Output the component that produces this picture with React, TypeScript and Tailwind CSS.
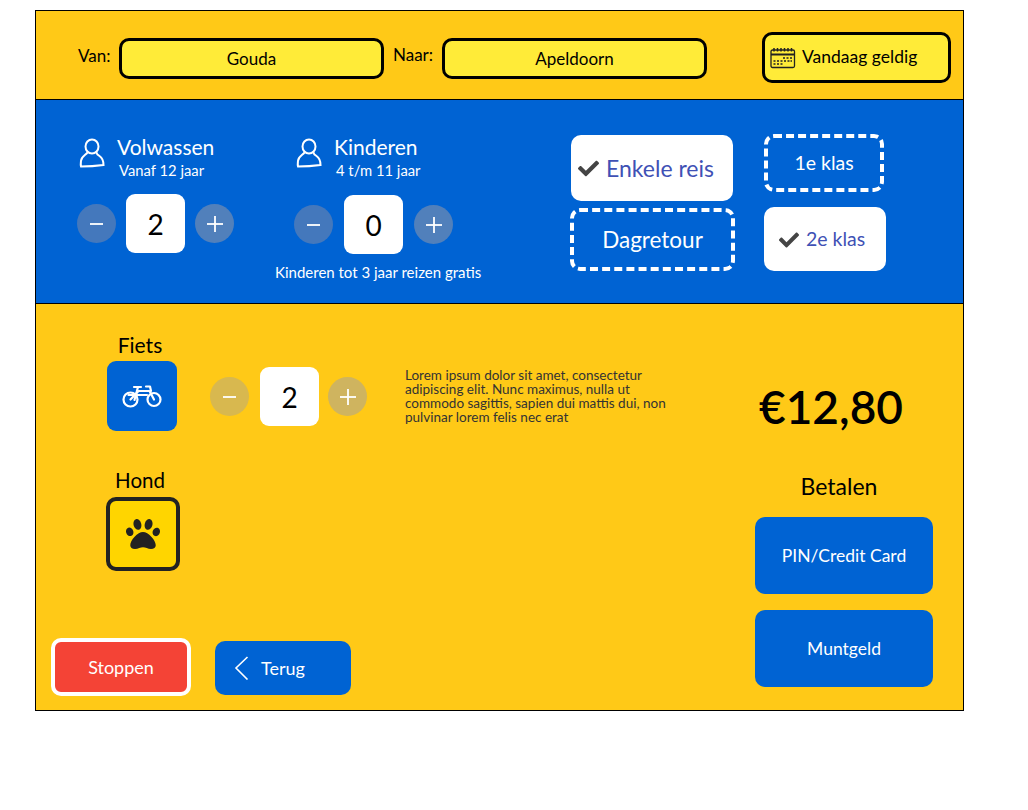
import { FaCheck, FaPaw } from 'react-icons/fa';

function PersonIcon() {
  return (
    <svg width="26" height="30" viewBox="0 0 26 30" fill="none" stroke="white" strokeWidth="2" strokeLinecap="round" className="shrink-0">
      <ellipse cx="13" cy="8.5" rx="6.5" ry="7" />
      <path d="M8.5 14.5C7 17 2.5 18 2 23C1.8 25 1.5 27 2 28.5C9 28.5 17 28 24.5 27C24.5 23 23.5 20 20.5 18C19 17 17.5 16 17.5 14.5" />
    </svg>
  );
}

function CalendarIcon() {
  return (
    <svg width="26" height="22" viewBox="0 0 26 22" fill="none" stroke="#222" strokeWidth="1.3" className="shrink-0">
      <rect x="1" y="3" width="23.5" height="17.5" rx="1.5" />
      <path d="M1 7.5H24.5" strokeWidth="2" />
      <path d="M4 1V4.5M7.5 1V4.5M11 1V4.5M14.5 1V4.5M18 1V4.5M21.5 1V4.5" strokeWidth="1.5" />
      <path d="M13 11H15M16.5 11H18.5M20 11H22M3.5 14H5.5M7 14H9M10.5 14H12.5M14 14H16M17.5 14H19.5M20.5 14H22M3.5 17H5.5M7 17H9M10.5 17H12.5" strokeWidth="1.3" />
    </svg>
  );
}

function BikeIcon() {
  return (
    <svg width="40" height="23" viewBox="0 0 40 23" fill="none" stroke="white" strokeWidth="2.2" strokeLinecap="round" strokeLinejoin="round">
      <circle cx="8.5" cy="14.5" r="7" />
      <circle cx="32" cy="14.5" r="6.5" />
      <path d="M8.5 14.5L16.5 6H27.5L32 14.5" />
      <path d="M6.5 10H25M12.5 15L16 2M12 2H19M24 1.5H28L29 6" />
    </svg>
  );
}

function Stepper({
  value,
  minusClass,
  plusClass,
  boxClass,
}: {
  value: number;
  minusClass: string;
  plusClass: string;
  boxClass: string;
}) {
  return (
    <div className="flex items-center">
      <div className={`flex h-[39px] w-[39px] items-center justify-center rounded-full ${minusClass}`}>
        <span className="h-[2px] w-[13px] bg-white/90" />
      </div>
      <div className={`flex h-[59px] w-[59px] items-center justify-center rounded-[9px] bg-white text-[28px] text-black ${boxClass}`}>
        {value}
      </div>
      <div className={`relative flex h-[39px] w-[39px] items-center justify-center rounded-full ${plusClass}`}>
        <span className="h-[2px] w-[16px] bg-white/90" />
        <span className="absolute h-[16px] w-[2px] bg-white/90" />
      </div>
    </div>
  );
}

function Passenger({ title, sub }: { title: string; sub: string }) {
  return (
    <div className="flex h-[60px] items-start">
      <div className="ml-[2px] mt-[4px]">
        <PersonIcon />
      </div>
      <div className="-mt-[1px] ml-[12px] text-white">
        <div className="text-[21px] leading-[28px]">{title}</div>
        <div className="ml-[2px] text-[14.8px] leading-[18px]">{sub}</div>
      </div>
    </div>
  );
}

export default function App() {
  return (
    <div className="bg-white pl-[35px] pt-[10px] font-['Lato',sans-serif]">
      <div className="h-[701px] w-[929px] border border-black">
        {/* Van / naar */}
        <div className="flex h-[89px] items-center border-b border-black bg-[#FFC917] pt-[6px] text-black">
          <span className="ml-[42px] w-[41px] pb-[4px] text-[17px]">Van:</span>
          <div className="flex h-[41px] w-[265px] items-center justify-center rounded-[10px] border-[3px] border-black bg-[#FFEB38] pt-[2px] text-[17px]">
            Gouda
          </div>
          <span className="ml-[9px] w-[49px] pb-[6px] text-[17px]">Naar:</span>
          <div className="flex h-[41px] w-[265px] items-center justify-center rounded-[10px] border-[3px] border-black bg-[#FFEB38] pt-[2px] text-[17px]">
            Apeldoorn
          </div>
          <div className="-mt-[1px] ml-[55px] flex h-[51px] w-[189px] items-center rounded-[10px] border-[3px] border-black bg-[#FFEB38] pl-[5px]">
            <CalendarIcon />
            <span className="ml-[6px] text-[17.5px]">Vandaag geldig</span>
          </div>
        </div>

        {/* Reizigers */}
        <div className="flex h-[204px] border-b border-black bg-[#0063D3] pt-[34px]">
          <div className="ml-[41px] w-[217px]">
            <Passenger title="Volwassen" sub="Vanaf 12 jaar" />
            <Stepper value={2} minusClass="bg-[#4478BC]" plusClass="ml-[10px] bg-[#5180BB]" boxClass="ml-[10px]" />
          </div>
          <div className="w-[276px]">
            <Passenger title="Kinderen" sub="4 t/m 11 jaar" />
            <div className="mt-[1px]">
              <Stepper value={0} minusClass="bg-[#4478BC]" plusClass="ml-[11px] bg-[#5180BB]" boxClass="ml-[11px]" />
            </div>
            <div className="-ml-[19px] mt-[8px] whitespace-nowrap text-[15px] leading-[20px] text-white">
              Kinderen tot 3 jaar reizen gratis
            </div>
          </div>
          <div className="w-[165px]">
            <div className="ml-[1px] mt-[1px] flex h-[66px] w-[162px] items-center rounded-[10px] bg-white pl-[7px] text-[23px] text-[#3F51B5]">
              <FaCheck className="mr-[7px] h-[21px] w-[21px] text-[#444]" />
              Enkele reis
            </div>
            <div className="mt-[7px] flex h-[63px] w-[165px] items-center justify-center rounded-[10px] border-[4px] border-dashed border-white text-[22.5px] text-white">
              Dagretour
            </div>
          </div>
          <div className="ml-[29px]">
            <div className="flex h-[58px] w-[120px] items-center justify-center rounded-[10px] border-[4px] border-dashed border-white text-[19.5px] text-white">
              1e klas
            </div>
            <div className="mt-[15px] flex h-[64px] w-[122px] items-center rounded-[10px] bg-white pb-[1px] pl-[15px] text-[19.5px] text-[#3F51B5]">
              <FaCheck className="mr-[7px] mt-[3px] h-[20px] w-[20px] text-[#444]" />
              2e klas
            </div>
          </div>
        </div>

        {/* Extra's en betalen */}
        <div className="flex h-[406px] justify-between bg-[#FFC917] text-black">
          <div className="flex flex-col pb-[14px] pt-[29px]">
            <div className="flex items-start">
              <div className="ml-[71px] flex w-[70px] flex-col items-center">
                <div className="mr-[4px] h-[28px] text-[21px] leading-[24px]">Fiets</div>
                <div className="flex h-[70px] w-[70px] items-center justify-center rounded-[9px] bg-[#0063D3]">
                  <BikeIcon />
                </div>
              </div>
              <div className="ml-[33px] mt-[34px]">
                <Stepper value={2} minusClass="bg-[#D8B84F]" plusClass="ml-[9px] bg-[#CFB45F]" boxClass="ml-[11px]" />
              </div>
              <p className="ml-[38px] mt-[35px] w-[275px] text-[13.5px] leading-[14px] text-[#333]">
                Lorem ipsum dolor sit amet, consectetur adipiscing elit. Nunc maximus, nulla ut commodo sagittis, sapien dui mattis dui, non pulvinar lorem felis nec erat
              </p>
            </div>
            <div className="ml-[70px] mt-[36px] flex w-[74px] flex-col items-center">
              <div className="mr-[6px] h-[30px] text-[20.5px] leading-[26px]">Hond</div>
              <div className="flex h-[74px] w-[74px] items-center justify-center rounded-[10px] border-[4px] border-[#222] bg-[#FFD500]">
                <FaPaw className="h-[34px] w-[34px] text-[#222]" />
              </div>
            </div>
            <div className="mt-auto flex items-end pl-[15px]">
              <div className="flex h-[58px] w-[140px] items-center justify-center rounded-[10px] border-[4px] border-white bg-[#F44336] pt-[1px] text-[18px] text-white">
                Stoppen
              </div>
              <div className="mb-[1px] ml-[24px] flex h-[54px] w-[136px] items-center rounded-[10px] bg-[#0063D3] pl-[19px] text-[18px] text-white">
                <svg width="15" height="24" viewBox="0 0 15 24" fill="none" stroke="white" strokeWidth="1.6" className="mr-[12px]">
                  <path d="M13.5 1L2 12L13.5 23.5" />
                </svg>
                Terug
              </div>
            </div>
          </div>
          <div className="mr-[30px] w-[178px] pt-[73px]">
            <div className="ml-[4px] h-[60px] whitespace-nowrap text-[46px] font-semibold leading-[60px]">€12,80</div>
            <div className="mt-[35px] h-[30px] pr-[10px] text-center text-[23px] leading-[28px]">Betalen</div>
            <div className="mt-[15px] flex h-[77px] items-center justify-center rounded-[10px] bg-[#0063D3] pt-[2px] text-[17.5px] text-white">
              PIN/Credit Card
            </div>
            <div className="mt-[16px] flex h-[77px] items-center justify-center rounded-[10px] bg-[#0063D3] pt-[2px] text-[17.5px] text-white">
              Muntgeld
            </div>
          </div>
        </div>
      </div>
      <div className="h-[99px]" />
    </div>
  );
}
